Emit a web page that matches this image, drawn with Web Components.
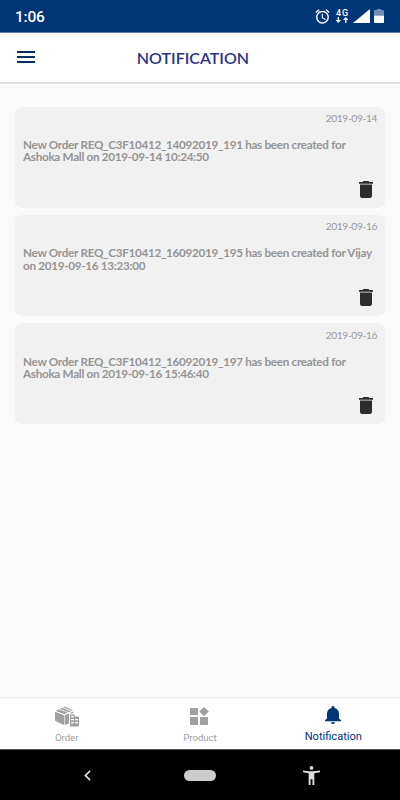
<!DOCTYPE html>
<html lang="en">
<head>
<meta charset="utf-8">
<meta name="viewport" content="width=device-width, initial-scale=1">
<title>Notification</title>
<style>
  html, body { margin: 0; height: 100%; }
  body { background: #fafafa; font-family: Lato, "Liberation Sans", sans-serif; overflow: hidden; }
</style>
</head>
<body>
<app-screen>
  <status-bar slot="top" time="1:06"></status-bar>
  <app-header slot="top">NOTIFICATION</app-header>

  <notice-card date="2019-09-14">New Order REQ_C3F10412_14092019_191 has been created for Ashoka Mall on 2019-09-14 10:24:50</notice-card>
  <notice-card date="2019-09-16">New Order REQ_C3F10412_16092019_195 has been created for Vijay on 2019-09-16 13:23:00</notice-card>
  <notice-card date="2019-09-16">New Order REQ_C3F10412_16092019_197 has been created for Ashoka Mall on 2019-09-16 15:46:40</notice-card>

  <tab-bar slot="bottom">
    <tab-item icon="order">Order</tab-item>
    <tab-item icon="product">Product</tab-item>
    <tab-item icon="bell" active>Notification</tab-item>
  </tab-bar>
  <system-nav slot="bottom"></system-nav>
</app-screen>

<script>
(function () {
  // name -> [width, height, viewBox, markup]
  const ICONS = {
    alarm: [15, 15, '1.5 1.5 21 21', '<path fill="currentColor" d="M22 5.72l-4.6-3.86-1.29 1.53 4.6 3.86L22 5.72zM7.88 3.39L6.6 1.86 2 5.71l1.29 1.53 4.59-3.85zM12.5 8H11v6l4.75 2.85.75-1.23-4-2.37V8zM12 4c-4.97 0-9 4.03-9 9s4.02 9 9 9a9 9 0 0 0 0-18zm0 16c-3.87 0-7-3.13-7-7s3.13-7 7-7 7 3.13 7 7-3.13 7-7 7z"/>'],
    updown: [14, 6, '0 0 14 6', '<path fill="currentColor" d="M2.6 0h1.4v3h2l-2.7 3L.6 3h2zM10 6h1.4V3h2l-2.7-3L8 3h2z"/>'],
    signal: [17, 14, '0 0 17 14', '<path fill="currentColor" d="M17 0v14H0z"/>'],
    battery: [10, 14, '0 0 10 14', '<path fill="#6f8fb5" d="M3 0h4v1h2q1 0 1 1v4.5H0V2q0-1 1-1h2z"/><path fill="currentColor" d="M0 6.5h10V13q0 1-1 1H1q-1 0-1-1z"/>'],
    menu: [18, 12, '0 0 18 12', '<path fill="currentColor" d="M0 0h18v2H0zM0 5h18v2H0zM0 10h18v2H0z"/>'],
    trash: [14, 17, '5 3 14 18', '<path fill="currentColor" d="M6 19c0 1.1.9 2 2 2h8c1.1 0 2-.9 2-2V6.6H6V19zM19 4h-3.5l-1-1h-5l-1 1H5v2h14V4z"/>'],
    order: [24, 21, '0 0 24 21', '<g fill="currentColor"><path d="M0 5.8l9 3.4v9.9L.9 15.3Q0 15 0 14.1z"/><path d="M9.6 9.2l8.8-3.6v2H14v10l-4.4 1.5z"/><path d="M.8 4.9L3.9 3.2l8.7 3.4-3.1 1.7zM4.8 2.7l2.1-1 8.8 3.5-2.2 1zM7.9 1.2L9.8.4l8 3.8-1.2.6z"/><path fill-rule="evenodd" d="M15 8.5h4.8v2H24v10h-9zM16 10v1.2h3V10zm0 3v1.2h3V13zm4.2 0v1.2H23V13zM16 16v1.2h3V16zm4.2 0v1.2H23V16z"/></g>'],
    product: [19, 18, '0 0 19 18', '<path fill="currentColor" d="M0 1h8v7H0zM0 10h8v8H0zM10 10h8v8h-8zM14 0l4.9 4.6-4.9 4.7-4.8-4.7z"/>'],
    bell: [16, 18, '4 2.5 16 19.5', '<path fill="currentColor" d="M12 22c1.1 0 2-.9 2-2h-4a2 2 0 0 0 2 2zm6-6v-5c0-3.07-1.64-5.64-4.5-6.32V4a1.5 1.5 0 0 0-3 0v.68C7.63 5.36 6 7.92 6 11v5l-2 2v1h16v-1l-2-2z"/>'],
    back: [7, 11, '0 0 7 11', '<path fill="none" stroke="currentColor" stroke-width="1.7" d="M6.1.8L1.4 5.5l4.7 4.7"/>'],
    person: [17, 19, '3 2 18 20', '<path fill="currentColor" d="M12 2a2 2 0 1 1 0 4 2 2 0 0 1 0-4zm9 6.6l-6 .9V22h-2v-6h-2v6H9V9.5l-6-.9V6.8l6.2.7h5.6l6.2-.7z"/>'],
  };

  function icon(name) {
    const [w, h, box, body] = ICONS[name];
    return `<svg width="${w}" height="${h}" viewBox="${box}" preserveAspectRatio="none" aria-hidden="true">${body}</svg>`;
  }

  const BASE = '*{ box-sizing:border-box; } svg{ display:block; flex:none; }';

  class AppScreen extends HTMLElement {
    connectedCallback() {
      this.attachShadow({ mode: 'open' }).innerHTML = `
        <style>
          ${BASE}
          :host{ display:flex; flex-direction:column; height:800px; }
          main{ flex:1; min-height:0; display:flex; flex-direction:column; gap:7.4px; padding:22.5px 15px 0; }
        </style>
        <slot name="top"></slot>
        <main><slot></slot></main>
        <slot name="bottom"></slot>`;
    }
  }

  class StatusBar extends HTMLElement {
    connectedCallback() {
      this.attachShadow({ mode: 'open' }).innerHTML = `
        <style>
          ${BASE}
          :host{ display:flex; align-items:center; justify-content:space-between; height:33px; flex:none;
            padding:0 16px 0 15px; box-sizing:border-box; background:#003678; border-bottom:1px solid #5f7fa8; color:#fff;
            font-family:Roboto, sans-serif; }
          time{ font-size:15.5px; font-weight:500; line-height:18px; padding-top:2px; letter-spacing:-.2px; }
          .tray{ display:flex; align-items:center; height:16px; }
          .net{ display:flex; flex-direction:column; align-items:center; width:14px; margin:0 4px 0 5px; }
          .net span{ font-size:9px; font-weight:500; line-height:8px; letter-spacing:.8px; margin-right:-.8px; }
          .batt{ margin-left:4px; }
        </style>
        <time>${this.getAttribute('time')}</time>
        <div class="tray">
          ${icon('alarm')}
          <div class="net"><span>4G</span>${icon('updown')}</div>
          ${icon('signal')}
          <div class="batt">${icon('battery')}</div>
        </div>`;
    }
  }

  class AppHeader extends HTMLElement {
    connectedCallback() {
      this.attachShadow({ mode: 'open' }).innerHTML = `
        <style>
          ${BASE}
          :host{ display:grid; grid-template-columns:48px 1fr 62px; align-items:center; height:51px; flex:none;
            box-sizing:border-box; background:#fff; border-bottom:2px solid #e0e0e0; padding-bottom:1px; }
          button{ border:0; padding:0 0 0 17px; background:none; color:#06305f; }
          h1{ margin:0; padding-top:1px; text-align:center; font-size:16px; line-height:20px; font-weight:600; color:#2b3286; }
        </style>
        <button aria-label="Menu">${icon('menu')}</button>
        <h1><slot></slot></h1>`;
    }
  }

  class NoticeCard extends HTMLElement {
    connectedCallback() {
      this.attachShadow({ mode: 'open' }).innerHTML = `
        <style>
          ${BASE}
          :host{ display:flex; flex-direction:column; height:101px; flex:none; padding:5.4px 8px 10px;
            box-sizing:border-box; border-radius:7px; background:#f1f1f1; }
          time{ align-self:flex-end; font-size:10.2px; line-height:13px; letter-spacing:-.35px; color:#999; }
          p{ margin:13px 0 0; font-size:11.7px; line-height:12.5px; font-weight:700; letter-spacing:-.29px; color:#959595; }
          button{ align-self:flex-end; margin:auto 4px 0 0; padding:0; border:0; background:none; color:#2d2d2d; }
        </style>
        <time>${this.getAttribute('date')}</time>
        <p><slot></slot></p>
        <button aria-label="Delete">${icon('trash')}</button>`;
    }
  }

  class TabBar extends HTMLElement {
    connectedCallback() {
      this.attachShadow({ mode: 'open' }).innerHTML = `
        <style>
          :host{ display:grid; grid-template-columns:repeat(3, 1fr); height:52px; flex:none; box-sizing:border-box;
            background:#fff; border-top:2px solid #f1f1f1; font-family:Roboto, sans-serif; }
        </style>
        <slot></slot>`;
    }
  }

  class TabItem extends HTMLElement {
    connectedCallback() {
      this.attachShadow({ mode: 'open' }).innerHTML = `
        <style>
          ${BASE}
          :host{ display:flex; flex-direction:column; align-items:center; padding-top:7px; color:#a0a0a0;
            font-size:9.6px; line-height:12px; }
          :host([active]){ color:#003678; font-size:11.1px; }
          .pic{ height:20px; display:flex; align-items:center; }
          .cap{ margin-top:6px; }
          :host([active]) .pic{ height:18px; }
          :host([active]) .cap{ margin-top:7px; }
        </style>
        <div class="pic">${icon(this.getAttribute('icon'))}</div>
        <div class="cap"><slot></slot></div>`;
    }
  }

  class SystemNav extends HTMLElement {
    connectedCallback() {
      this.attachShadow({ mode: 'open' }).innerHTML = `
        <style>
          ${BASE}
          :host{ display:flex; align-items:center; justify-content:space-between; height:51px; flex:none;
            box-sizing:border-box; padding:0 80px 0 84px; background:#000; border-top:1px solid #555; color:#dcdcdc; }
          .home{ width:32px; height:11px; border-radius:6px; background:#ccc; margin-left:6px; }
        </style>
        ${icon('back')}
        <div class="home"></div>
        ${icon('person')}`;
    }
  }

  customElements.define('app-screen', AppScreen);
  customElements.define('status-bar', StatusBar);
  customElements.define('app-header', AppHeader);
  customElements.define('notice-card', NoticeCard);
  customElements.define('tab-bar', TabBar);
  customElements.define('tab-item', TabItem);
  customElements.define('system-nav', SystemNav);
})();
</script>
</body>
</html>
